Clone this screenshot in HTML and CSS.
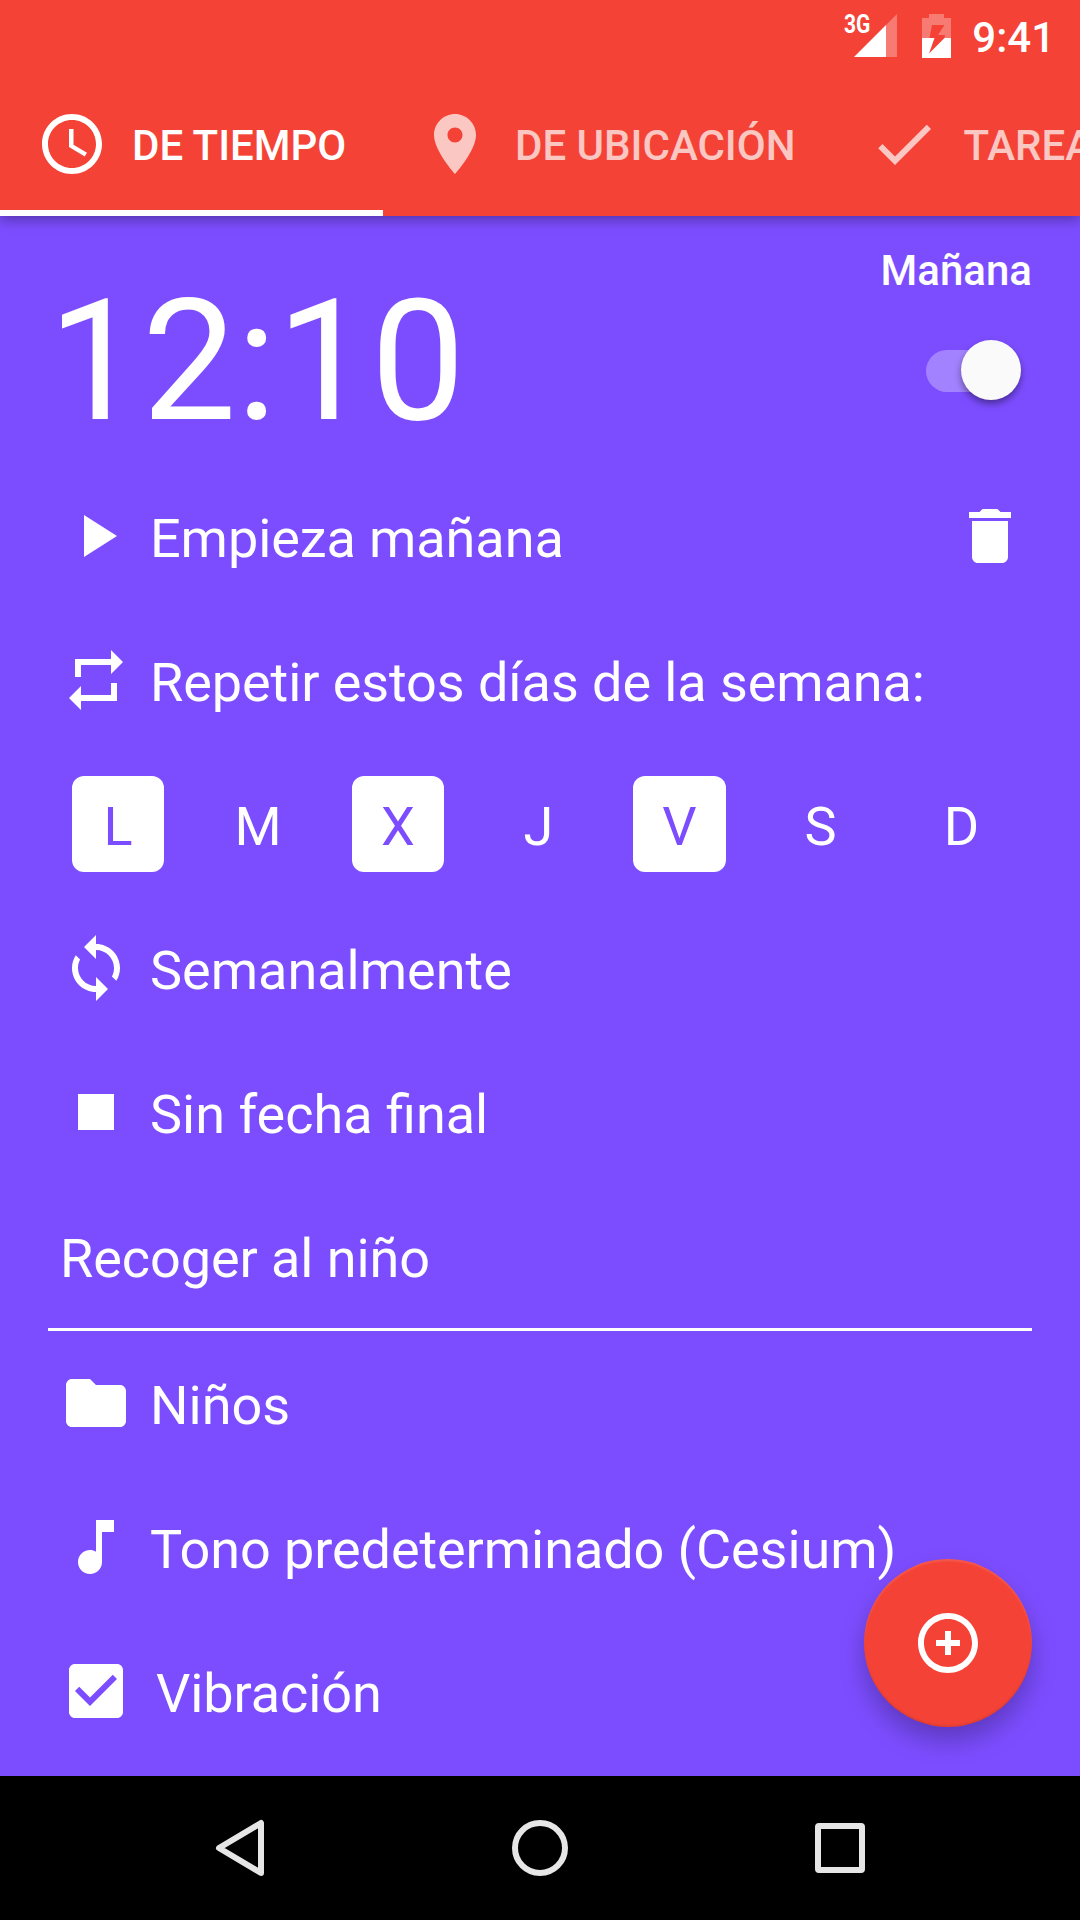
FILE: index.html
```html
<!DOCTYPE html>
<html lang="es">
<head>
<meta charset="utf-8">
<title>Recordatorio</title>
<link rel="stylesheet" href="styles.css">
</head>
<body>
<div class="screen">
  <header class="app-bar">
    <div class="status">
      <div class="network">
        <svg width="43" height="43" viewBox="0 0 43 43"><path class="faded" d="M32 11 43 0v43H32z"/><path d="M0 43 32 11v32z"/></svg>
        <span class="network-type">3G</span>
      </div>
      <svg class="battery" width="29" height="44" viewBox="0 0 29 44"><path class="faded" d="M0 24V4h7V0h15v4h7v20h-6.500l.5-3H16l6.500-10H10L7.500 24z"/><path d="M0 24h12.500L7 39.500 22.500 24H29v20H0z"/></svg>
      <span class="clock">9:41</span>
    </div>
    <nav class="tabs">
      <div class="tab active">
        <svg class="icon" viewBox="0 0 24 24"><path d="M11.990 2C6.470 2 2 6.480 2 12s4.470 10 9.990 10C17.520 22 22 17.520 22 12S17.520 2 11.990 2zM12 20c-4.420 0-8-3.580-8-8s3.580-8 8-8 8 3.580 8 8-3.580 8-8 8zm.5-13H11v6l5.250 3.150.75-1.230-4.500-2.670z"/></svg>
        <span>DE TIEMPO</span>
      </div>
      <div class="tab">
        <svg class="icon" viewBox="0 0 24 24"><path d="M12 2C8.130 2 5 5.130 5 9c0 5.250 7 13 7 13s7-7.750 7-13c0-3.870-3.130-7-7-7zm0 9.500c-1.380 0-2.500-1.120-2.500-2.500s1.120-2.500 2.500-2.500 2.500 1.120 2.500 2.500-1.120 2.500-2.500 2.500z"/></svg>
        <span>DE UBICACIÓN</span>
      </div>
      <div class="tab">
        <svg class="icon" viewBox="0 0 24 24"><path d="M9 16.170 4.830 12l-1.420 1.410L9 19 21 7l-1.410-1.410z"/></svg>
        <span>TAREAS</span>
      </div>
    </nav>
  </header>

  <main class="content">
    <section class="alarm">
      <div class="time">12:10</div>
      <div class="alarm-side">
        <span class="day-label">Mañana</span>
        <span class="switch"><span class="thumb"></span></span>
      </div>
    </section>

    <div class="row">
      <svg class="icon" viewBox="0 0 24 24"><path d="M8 5v14l11-7z"/></svg>
      <span class="label tight">Empieza mañana</span>
      <svg class="icon delete" viewBox="0 0 24 24"><path d="M6 19c0 1.100.9 2 2 2h8c1.100 0 2-.9 2-2V7H6v12zM19 4h-3.500l-1-1h-5l-1 1H5v2h14V4z"/></svg>
    </div>
    <div class="row">
      <svg class="icon" viewBox="0 0 24 24"><path d="M7 7h10v3l4-4-4-4v3H5v6h2V7zm10 10H7v-3l-4 4 4 4v-3h12v-6h-2v4z"/></svg>
      <span class="label tight">Repetir estos días de la semana:</span>
    </div>
    <div class="days">
      <span class="day on">L</span>
      <span class="day">M</span>
      <span class="day on">X</span>
      <span class="day">J</span>
      <span class="day on">V</span>
      <span class="day">S</span>
      <span class="day">D</span>
    </div>
    <div class="row">
      <svg class="icon" viewBox="0 0 24 24"><path d="M12 4V1L8 5l4 4V6c3.310 0 6 2.690 6 6 0 1.010-.25 1.970-.7 2.800l1.460 1.460C19.540 15.030 20 13.570 20 12c0-4.420-3.580-8-8-8zm0 14c-3.310 0-6-2.690-6-6 0-1.010.25-1.970.7-2.800L5.240 7.740C4.460 8.970 4 10.430 4 12c0 4.420 3.580 8 8 8v3l4-4-4-4v3z"/></svg>
      <span class="label">Semanalmente</span>
    </div>
    <div class="row">
      <svg class="icon" viewBox="0 0 24 24"><path d="M6 6h12v12H6z"/></svg>
      <span class="label">Sin fecha final</span>
    </div>
    <div class="row note"><span class="label tight">Recoger al niño</span></div>
    <div class="row">
      <svg class="icon" viewBox="0 0 24 24"><path d="M10 4H4c-1.100 0-1.990.9-1.990 2L2 18c0 1.100.9 2 2 2h16c1.100 0 2-.9 2-2V8c0-1.100-.9-2-2-2h-8l-2-2z"/></svg>
      <span class="label">Niños</span>
    </div>
    <div class="row">
      <svg class="icon" viewBox="0 0 24 24"><path d="M12 3v10.550c-.59-.34-1.270-.55-2-.55-2.210 0-4 1.790-4 4s1.790 4 4 4 4-1.790 4-4V7h4V3h-6z"/></svg>
      <span class="label tight">Tono predeterminado (Cesium)</span>
    </div>
    <div class="row vibration">
      <svg class="icon" viewBox="0 0 24 24"><path d="M19 3H5c-1.110 0-2 .9-2 2v14c0 1.100.89 2 2 2h14c1.110 0 2-.9 2-2V5c0-1.100-.89-2-2-2zm-9 14-5-5 1.410-1.410L10 14.170l7.590-7.590L19 8l-9 9z"/></svg>
      <span class="label tight">Vibración</span>
    </div>
    <button class="fab" aria-label="Añadir">
      <svg class="icon" viewBox="0 0 24 24"><path d="M13 8h-2v3H8v2h3v3h2v-3h3v-2h-3V8zm-1-6C6.480 2 2 6.480 2 12s4.480 10 10 10 10-4.480 10-10S17.520 2 12 2zm0 18c-4.410 0-8-3.590-8-8s3.590-8 8-8 8 3.590 8 8-3.590 8-8 8z"/></svg>
    </button>
  </main>

  <footer class="nav-bar">
    <svg width="60" height="60" viewBox="0 0 60 60"><path d="M51 5v50L9 30z"/></svg>
    <svg width="60" height="60" viewBox="0 0 60 60"><circle cx="30" cy="30" r="25"/></svg>
    <svg width="60" height="60" viewBox="0 0 60 60"><rect x="8" y="8" width="44" height="44" rx="1"/></svg>
  </footer>
</div>
</body>
</html>
```
FILE: styles.css
```css
* {
  box-sizing: border-box;
}

body {
  margin: 0;
  font-family: Roboto, sans-serif;
  color: #fff;
}

.screen {
  display: flex;
  flex-direction: column;
  width: 1080px;
  height: 1920px;
  overflow: hidden;
  background: #7c4dff;
}

svg {
  display: block;
  flex: none;
  fill: currentColor;
}

.icon {
  width: 72px;
  height: 72px;
}

.faded {
  opacity: 0.3;
}

/* Status bar and tabs */
.app-bar {
  position: relative;
  z-index: 1;
  flex: none;
  height: 216px;
  background: #f44336;
  box-shadow: 0 4px 12px rgba(0, 0, 0, 0.32);
}

.status {
  display: flex;
  justify-content: flex-end;
  height: 72px;
  padding: 14px 25px 0 0;
}

.network {
  position: relative;
  margin: 0 25px 0 0;
}

.network-type {
  position: absolute;
  left: -10px;
  top: -3px;
  font-size: 26px;
  font-weight: 700;
  line-height: 26px;
  transform: scaleX(0.81);
  transform-origin: left;
}

.clock {
  margin: -1px 0 0 21px;
  font-size: 42px;
  font-weight: 500;
  line-height: 50px;
}

.tabs {
  display: flex;
  height: 144px;
  overflow: hidden;
}

.tab {
  display: flex;
  flex: none;
  align-items: center;
  gap: 24px;
  padding: 0 36px;
  font-size: 42px;
  font-weight: 500;
  white-space: nowrap;
}

.tab span {
  padding-top: 3px;
}

.tab:not(.active) > * {
  opacity: 0.7;
}

.tab.active {
  width: 383px;
  box-shadow: inset 0 -6px #fff;
}

/* Reminder */
.content {
  position: relative;
  flex: 1;
  padding: 0 48px;
}

.alarm {
  display: flex;
  justify-content: space-between;
  height: 248px;
}

.time {
  padding: 46px 0 0;
  font-size: 168px;
  line-height: 200px;
  letter-spacing: -0.3px;
}

.alarm-side {
  display: flex;
  flex-direction: column;
  align-items: flex-end;
  padding-top: 30px;
}

.day-label {
  font-size: 42px;
  font-weight: 500;
  line-height: 50px;
}

.switch {
  display: flex;
  align-items: center;
  justify-content: flex-end;
  width: 86px;
  height: 42px;
  margin: 54px 20px 0 0;
  border-radius: 21px;
  background: rgba(255, 255, 255, 0.3);
}

.thumb {
  flex: none;
  width: 60px;
  height: 60px;
  margin: -2px -9px 0 0;
  border-radius: 50%;
  background: #fafafa;
  box-shadow: 0 4px 7px rgba(0, 0, 0, 0.4);
}

.row {
  display: flex;
  align-items: center;
  gap: 18px;
  height: 144px;
  padding: 0 6px 0 12px;
  font-size: 54px;
}

.label {
  padding-top: 5px;
  white-space: nowrap;
}

.label.tight {
  letter-spacing: -0.08px;
}

.delete {
  margin-left: auto;
}

.row.note {
  height: 147px;
  border-bottom: 3px solid #fff;
}

.row.vibration {
  gap: 24px;
}

.days {
  display: grid;
  grid-template-columns: repeat(3, 140px) repeat(4, 141px);
  height: 144px;
  padding: 24px 0;
}

.day {
  display: flex;
  align-items: center;
  justify-content: center;
  margin: 0 24px;
  padding-top: 5px;
  border-radius: 12px;
  font-size: 54px;
}

.day.on {
  background: #fff;
  color: #7c4dff;
}

.fab {
  position: absolute;
  right: 48px;
  bottom: 49px;
  display: flex;
  align-items: center;
  justify-content: center;
  width: 168px;
  height: 168px;
  padding: 0;
  border: 0;
  border-radius: 50%;
  background: #f44336;
  color: #fff;
  box-shadow: 0 14px 24px rgba(0, 0, 0, 0.25), inset 0 2px 2px rgba(255, 255, 255, 0.12), inset 0 -2px 2px rgba(0, 0, 0, 0.08);
}

/* System navigation */
.nav-bar {
  display: flex;
  flex: none;
  align-items: center;
  justify-content: center;
  gap: 240px;
  height: 144px;
  background: #000;
}

.nav-bar svg {
  fill: none;
  stroke: #e6e6e6;
  stroke-width: 6;
  stroke-linejoin: round;
}
```
